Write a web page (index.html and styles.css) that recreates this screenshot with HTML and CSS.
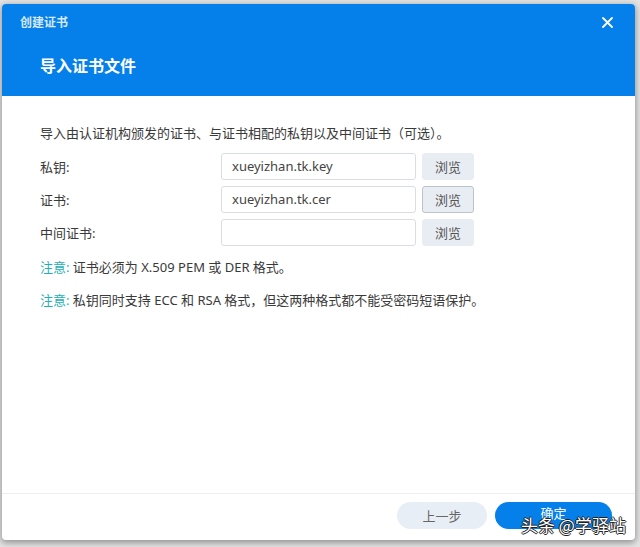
FILE: index.html
```html
<!DOCTYPE html>
<html lang="zh-CN">

<head>
    <meta charset="UTF-8">
    <meta name="viewport" content="width=device-width, initial-scale=1.0">
    <title>创建证书</title>
    <link rel="stylesheet" href="styles.css">
</head>

<body>
    <div class="dialog">
        <div class="dialog-header">
            <div class="header-top">
                <span class="window-title">创建证书</span>
                <span class="close-btn">
                    <svg width="11" height="11" viewBox="0 0 11 11">
                        <path d="M1 1 L10 10 M10 1 L1 10" stroke="#ffffff" stroke-width="1.8" fill="none" stroke-linecap="round"/>
                    </svg>
                </span>
            </div>
            <div class="step-title">导入证书文件</div>
        </div>

        <div class="dialog-body">
            <p class="intro">导入由认证机构颁发的证书、与证书相配的私钥以及中间证书（可选）。</p>

            <div class="form-row">
                <label class="form-label">私钥:</label>
                <div class="form-field">xueyizhan.tk.key</div>
                <button class="browse-btn">浏览</button>
            </div>
            <div class="form-row">
                <label class="form-label">证书:</label>
                <div class="form-field">xueyizhan.tk.cer</div>
                <button class="browse-btn active">浏览</button>
            </div>
            <div class="form-row">
                <label class="form-label">中间证书:</label>
                <div class="form-field"></div>
                <button class="browse-btn">浏览</button>
            </div>

            <p class="note"><span class="note-tag">注意:</span> 证书必须为 X.509 PEM 或 DER 格式。</p>
            <p class="note"><span class="note-tag">注意:</span> 私钥同时支持 ECC 和 RSA 格式，但这两种格式都不能受密码短语保护。</p>
        </div>

        <div class="dialog-footer">
            <button class="btn btn-back">上一步</button>
            <button class="btn btn-ok">确定</button>
        </div>
    </div>

    <div class="watermark">头条 @学驿站</div>
</body>

</html>
```

FILE: styles.css
```css
body {
    margin: 0;
    width: 640px;
    height: 547px;
    overflow: hidden;
    background-color: #e4e4e4;
    font-family: "Noto Sans", "Noto Sans CJK SC", sans-serif;
    font-size: 13px;
    color: #3a3a3a;
    position: relative;
}

.dialog {
    display: flex;
    flex-direction: column;
    width: 633px;
    height: 536px;
    margin: 4px 0 0 2px;
    background-color: #ffffff;
    border-radius: 4px;
    overflow: hidden;
    box-shadow: 0 2px 6px 1px rgba(0, 0, 0, 0.35);
}

.dialog-header {
    height: 92px;
    box-sizing: border-box;
    background-color: #057fea;
    color: #ffffff;
    padding: 8px 0 0 0;
}

.header-top {
    display: flex;
    justify-content: space-between;
    align-items: center;
    height: 20px;
    padding: 0 22px 0 18px;
}

.window-title {
    font-size: 12px;
    font-weight: bold;
    color: #d6e9fb;
}

.close-btn {
    display: flex;
}

.step-title {
    margin: 22px 0 0 38px;
    font-size: 16px;
    font-weight: bold;
    line-height: 24px;
}

.dialog-body {
    flex: 1;
    padding: 27px 0 0 38px;
}

.intro {
    margin: 0 0 10px 0;
    line-height: 20px;
}

.form-row {
    display: flex;
    align-items: center;
    height: 27px;
    margin-bottom: 6px;
}

.form-label {
    width: 181px;
}

.form-field {
    box-sizing: border-box;
    width: 195px;
    height: 27px;
    padding: 0 10px;
    border: 1px solid #d9dde3;
    border-radius: 3px;
    line-height: 25px;
    color: #444444;
}

.browse-btn {
    box-sizing: border-box;
    width: 52px;
    height: 27px;
    margin-left: 6px;
    padding: 0;
    border: 1px solid #e8edf3;
    border-radius: 3px;
    background-color: #e8edf3;
    font-family: inherit;
    font-size: 13px;
    color: #555555;
}

.browse-btn.active {
    border-color: #bcc3cc;
}

.note {
    margin: 11px 0 0 0;
    line-height: 20px;
}

.note + .note {
    margin-top: 13px;
}

.note-tag {
    color: #1fb0b5;
}

.dialog-footer {
    display: flex;
    justify-content: flex-end;
    align-items: center;
    gap: 8px;
    height: 47px;
    box-sizing: border-box;
    padding: 0 23px 4px 0;
    border-top: 1px solid #eeeeee;
}

.btn {
    height: 27px;
    border: none;
    border-radius: 14px;
    font-family: inherit;
    font-size: 13px;
}

.btn-back {
    width: 90px;
    background-color: #e8eef5;
    color: #666666;
}

.btn-ok {
    width: 117px;
    background-color: #057fea;
    color: #ffffff;
    padding-bottom: 6px;
}

/* водяной знак поверх кнопки */
.watermark {
    position: absolute;
    left: 521px;
    top: 512px;
    font-family: "Noto Sans CJK SC", sans-serif;
    font-size: 17px;
    color: #ffffff;
    text-shadow: 1px 0 0 #222, -1px 0 0 #222, 0 1px 0 #222, 0 -1px 0 #222;
}
```
